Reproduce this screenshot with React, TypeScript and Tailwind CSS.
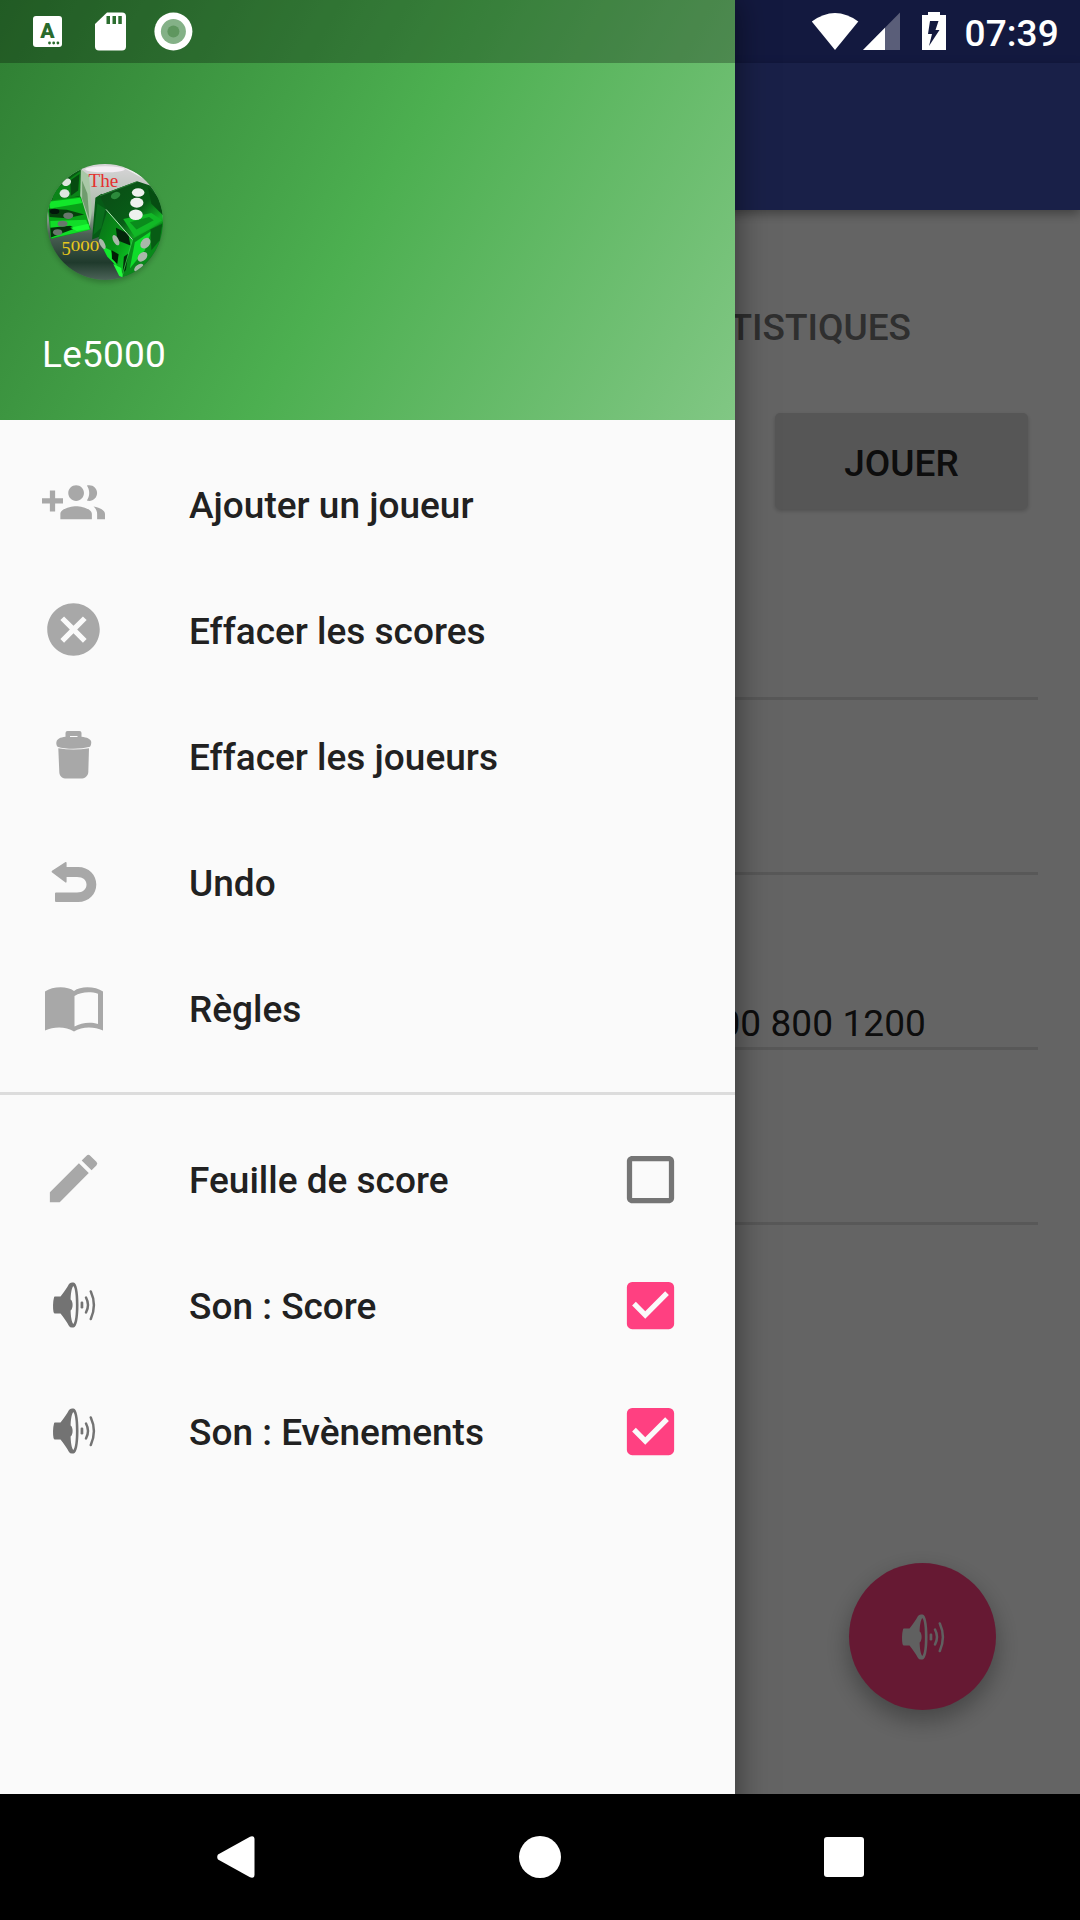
import type {ReactNode} from "react";
import {MdCancel, MdCheckBox, MdCheckBoxOutlineBlank, MdEdit} from "react-icons/md";

const rows = ["", "", "500 300 800 1200", ""];

function GroupAddIcon() {
    return (
        <svg viewBox="0 0 24 24" fill="currentColor" className="size-[63px]">
            <path d="M8 10H5V7H3v3H0v2h3v3h2v-3h3v-2zm10 1c1.660 0 2.990-1.340 2.990-3S19.660 5 18 5c-.32 0-.63.05-.91.14.57.81.9 1.790.9 2.860s-.34 2.040-.9 2.860c.28.09.59.14.91.14zm-5 0c1.660 0 2.990-1.340 2.990-3S14.660 5 13 5c-1.660 0-3 1.340-3 3s1.340 3 3 3zm6.620 2.160c.83.73 1.380 1.660 1.380 2.840v2h3v-2c0-1.540-2.370-2.490-4.380-2.840zM13 13c-2 0-6 1-6 3v2h12v-2c0-2-4-3-6-3z"/>
        </svg>
    )
}

function SpeakerIcon({className}: { className: string }) {
    return (
        <svg viewBox="0 0 44 46" fill="currentColor" className={className}>
            <path
                fillRule="evenodd"
                d="M2 15.5Q2 14.5 3 14.5H8.5C12 10 15 6 17 2Q18 .5 20 .5H21.5C24.8 .5 26.5 10 26.5 23S24.8 45.500 21.500 45.500H20Q18 45.500 17 44C15 40 12 36 8.500 31.500H3Q2 31.500 1.500 30C.8 26 .8 20 2 15.500ZM21.300 4C19.500 6 18.800 12 18.600 17.500C21.300 19 21.300 27 18.600 28.500C18.800 34 19.500 40 21.300 42C23.200 40 23.900 32 23.900 23S23.200 6 21.300 4Z"
            />
            <rect x="28.600" y="19.500" width="2.700" height="7" rx="1.200"/>
            <g fill="none" stroke="currentColor" strokeWidth="2.500" strokeLinecap="round">
                <path d="M34 15.500Q38 23 34 30.500"/>
                <path d="M38.800 9.500Q45 23 38.800 37"/>
            </g>
        </svg>
    )
}

function TrashIcon() {
    return (
        <svg viewBox="0 0 36 50" fill="currentColor" preserveAspectRatio="none" className="-mt-0.5 h-[49px] w-9">
            <path
                fillRule="evenodd"
                d="M9.500 7V3Q9.500 1 11.500 1H23.500Q25.500 1 25.500 3V7C31 7.500 35 9.500 35.200 12Q35.500 15 34 17Q27 19.200 17.500 19.200T1.500 17Q-.2 15 .5 12C1 9.500 4 7.500 9.500 7ZM14 6V7.200H21.500V6Z"
            />
            <path d="M2.300 18.500Q17.500 21.300 33 18.500L32.300 43C32 47 28.500 49.500 25 49.500H10.500C6.500 49.500 3.500 47 3.300 43Z"/>
        </svg>
    )
}

function UndoIcon() {
    return (
        <svg viewBox="0 0 46 42" fill="currentColor" className="h-[42px] w-[46px]">
            <path
                d="M.8 11.200Q.3 10.500 1 9.800L14.500 1Q15.600.6 15.600 2V6H27C38 6 45.300 14 45.300 23.500S38 41 27 41H5Q4 41 4 40V32.500Q4 31.500 5 31.500H26C32 31.500 35.500 28 35.500 23.500S32 16 26 16H15.600V20.500Q15.600 22 14.500 21.500Z"
            />
        </svg>
    )
}

function BookIcon() {
    return (
        <svg viewBox="0 0 58 45" fill="currentColor" className="mt-1 h-[45px] w-[58px]">
            <path
                fillRule="evenodd"
                d="M0 4.500C7-.5 22-1.500 29 4C36-1.500 51-.5 58 4.500V43.500C49 39.500 37 39.500 29 44.500C21 39.500 9 39.500 0 43.500ZM29.500 9V39.500C36 35.500 46 34.500 53 37V6.800C45 4.200 36 5 29.500 9Z"
            />
        </svg>
    )
}

function DiceAvatar() {
    return (
        <svg viewBox="80 70 350 350" className="size-[116px] rounded-full shadow-[0_3px_5px_rgba(0,0,0,0.2)]">
            <defs>
                <linearGradient id="table" x1="0" y1="0" x2="0" y2="1">
                    <stop offset="0" stopColor="#d9d5d9"/>
                    <stop offset=".4" stopColor="#a9bba9"/>
                    <stop offset=".6" stopColor="#4d6256"/>
                    <stop offset=".85" stopColor="#1f3a2c"/>
                    <stop offset="1" stopColor="#4c6358"/>
                </linearGradient>
                <linearGradient id="dieTop" x1="0" y1="0" x2="1" y2="1">
                    <stop offset="0" stopColor="#0a4a15"/>
                    <stop offset=".55" stopColor="#085c17"/>
                    <stop offset=".8" stopColor="#14b425"/>
                    <stop offset="1" stopColor="#064a10"/>
                </linearGradient>
                <linearGradient id="dieFront" x1="0" y1="0" x2="1" y2="1">
                    <stop offset="0" stopColor="#0b6a1a"/>
                    <stop offset=".5" stopColor="#069416"/>
                    <stop offset="1" stopColor="#12dd2c"/>
                </linearGradient>
            </defs>
            <rect x="80" y="70" width="350" height="350" fill="url(#table)"/>
            <ellipse cx="255" cy="86" rx="60" ry="9" fill="#f4eef4"/>
            <path d="M300 75L430 130V175L385 122Z" fill="#eef1ee"/>
            {/* left die */}
            <path d="M80 70H185L182 180L85 200Z" fill="#075c12"/>
            <path d="M100 150L180 92L182 165L95 185Z" fill="#0b8418"/>
            <path d="M150 120L178 100L174 150L152 166Z" fill="#064a10"/>
            <path d="M182 85L207 105L215 215L207 270L180 170Z" fill="#a9c8a7"/>
            <path d="M186 120L202 160L208 240L186 175Z" fill="#6f9c6d"/>
            <path d="M80 182L182 168L212 268L92 296Z" fill="#08a017"/>
            <path d="M85 184L180 172L187 188L90 204Z" fill="#12e62a"/>
            <path d="M85 205L140 208L192 222L140 234L88 230Z" fill="#053f0c"/>
            <path d="M90 242L198 238L210 268L92 294Z" fill="#11dd28"/>
            <path d="M90 262L150 256L166 264L92 292Z" fill="#04330a"/>
            <path d="M150 262L205 250L208 266L170 272Z" fill="#19ff32"/>
            <g fill="#dfe6df">
                <ellipse cx="139" cy="125" rx="14" ry="11" transform="rotate(-25 139 125)"/>
                <ellipse cx="133" cy="159" rx="15" ry="13"/>
            </g>
            <g fill="#68776c">
                <ellipse cx="144" cy="226" rx="15" ry="10"/>
                <ellipse cx="127" cy="250" rx="15" ry="9"/>
                <ellipse cx="112" cy="276" rx="14" ry="9"/>
            </g>
            <ellipse cx="103" cy="213" rx="14" ry="8" fill="#02160a"/>
            {/* right die */}
            <path d="M226 172L245 160L342 296L250 285L216 298Z" fill="#065a16"/>
            <path d="M232 190L256 205L244 262L220 284Z" fill="#0a6e1c"/>
            <path d="M238 164L352 122L400 138L430 190V260L340 296L258 205Z" fill="url(#dieTop)"/>
            <path d="M310 236L395 218L428 240L345 290Z" fill="#11b826"/>
            <path d="M330 246L388 230L402 240L350 268Z" fill="#0a8c1c"/>
            <path d="M385 140L430 185V225L395 190Z" fill="#064d12"/>
            <path d="M235 296L262 210L338 296L308 412Z" fill="url(#dieFront)"/>
            <path d="M338 296L430 245V345L370 400L304 412Z" fill="#098a1a"/>
            <path d="M345 306L395 272L375 330L330 385Z" fill="#0fdc2a"/>
            <path d="M392 268L428 250L420 300L395 330Z" fill="#075c14"/>
            <path d="M288 262L325 280L332 316L292 300Z" fill="#03260a"/>
            <path d="M246 318L272 330L292 380L262 350Z" fill="#12e62d"/>
            <path d="M275 330L296 342L292 372L276 356Z" fill="#021c06"/>
            <path d="M312 350L325 340L318 390L308 400Z" fill="#032f0a"/>
            <path d="M280 372L304 384L308 412L298 408Z" fill="#22ff3c"/>
            <path d="M258 207L338 298" stroke="#b9e8bd" strokeWidth="3"/>
            <path d="M338 298L306 410" stroke="#41e356" strokeWidth="2"/>
            <path d="M240 166L350 124" stroke="#2a7d36" strokeWidth="3"/>
            <ellipse cx="287" cy="165" rx="15" ry="10" fill="#2c8a3b" transform="rotate(-25 287 165)"/>
            <g fill="#eef1ee">
                <ellipse cx="355" cy="156" rx="19" ry="13"/>
                <ellipse cx="351" cy="187" rx="20" ry="15"/>
                <ellipse cx="348" cy="223" rx="21" ry="16"/>
            </g>
            <g fill="#a9b8a9">
                <ellipse cx="377" cy="309" rx="18" ry="13" transform="rotate(-50 377 309)"/>
                <ellipse cx="368" cy="350" rx="17" ry="12" transform="rotate(-45 368 350)"/>
                <ellipse cx="357" cy="383" rx="16" ry="9" transform="rotate(-35 357 383)"/>
                <ellipse cx="288" cy="300" rx="8" ry="17" transform="rotate(-28 288 300)"/>
                <ellipse cx="247" cy="311" rx="7" ry="17" transform="rotate(-28 247 311)"/>
            </g>
            <g className="font-['Liberation_Serif',serif]">
                <text x="205" y="138" fontSize="56" fill="#e5302f" textLength="90" lengthAdjust="spacingAndGlyphs">The</text>
                <g fill="#e8c81c">
                    <text x="124" y="344" fontSize="56" textLength="28" lengthAdjust="spacingAndGlyphs">5</text>
                    <text x="152" y="334" fontSize="41" textLength="86" lengthAdjust="spacingAndGlyphs">000</text>
                </g>
            </g>
        </svg>
    )
}

function MenuItem({icon, label, children}: { icon: ReactNode; label: string; children?: ReactNode }) {
    return (
        <li className="flex h-[126px] items-center pl-[42px] pr-[53px]">
            <span className="flex size-[63px] items-center justify-center pb-px text-[#a8a8a8]">{icon}</span>
            <span className="ml-[84px] flex-1 pt-0.5 font-medium text-[#212121]">{label}</span>
            {children}
        </li>
    )
}

function Drawer() {
    return (
        <aside className="absolute -bottom-8 left-0 top-0 w-[735px] bg-[#fafafa] shadow-[0_0_32px_rgba(0,0,0,0.5)]">
            <header className="flex h-[420px] flex-col bg-[linear-gradient(119.7deg,#2e7d32,#4caf50_50%,#81c784)]">
                <div className="h-[63px] bg-black/27"/>
                <div className="pl-[47px] pt-[101px]">
                    <DiceAvatar/>
                </div>
                <p className="pl-[42px] pt-[53px] tracking-[0.2px] text-white">Le5000</p>
            </header>
            <ul className="border-b-3 border-[#dcdcdc] py-[21px]">
                <MenuItem icon={<GroupAddIcon/>} label="Ajouter un joueur"/>
                <MenuItem icon={<MdCancel className="size-[63px]"/>} label="Effacer les scores"/>
                <MenuItem icon={<TrashIcon/>} label="Effacer les joueurs"/>
                <MenuItem icon={<UndoIcon/>} label="Undo"/>
                <MenuItem icon={<BookIcon/>} label="Règles"/>
            </ul>
            <ul className="pt-[21px]">
                <MenuItem icon={<MdEdit className="size-[63px]"/>} label="Feuille de score">
                    <MdCheckBoxOutlineBlank className="size-[63px] text-[#757575]"/>
                </MenuItem>
                <MenuItem icon={<SpeakerIcon className="h-[46px] w-11 text-[#737373]"/>} label="Son : Score">
                    <MdCheckBox className="size-[63px] text-[#ff4081]"/>
                </MenuItem>
                <MenuItem icon={<SpeakerIcon className="h-[46px] w-11 text-[#737373]"/>} label="Son : Evènements">
                    <MdCheckBox className="size-[63px] text-[#ff4081]"/>
                </MenuItem>
            </ul>
        </aside>
    )
}

function StatusBar() {
    return (
        <div className="absolute inset-x-0 top-0 flex h-[63px] items-center text-white">
            <svg viewBox="0 0 200 63" className="h-[63px] w-[200px]" fill="currentColor">
                <rect x="33" y="16" width="29" height="31" rx="3"/>
                <g fill="#2a6b2d">
                    <text x="47.300" y="38.300" fontSize="21" fontWeight="900" textAnchor="middle">A</text>
                    <circle cx="49.500" cy="43" r="1.400"/>
                    <circle cx="53.700" cy="43" r="1.400"/>
                    <circle cx="57.900" cy="43" r="1.400"/>
                </g>
                <path d="M107 12.500H122Q126 12.500 126 16.500V46.500Q126 50.500 122 50.500H99Q95 50.500 95 46.500V24Z"/>
                <path d="M106.500 16H110V24H106.500ZM112.500 16H116V24H112.500ZM118.300 16H121.800V24H118.300Z" fill="#2c6e30"/>
                <circle cx="173.400" cy="31.500" r="19"/>
                <circle cx="173.400" cy="31.500" r="12.500" fill="#84b187"/>
                <circle cx="173.400" cy="31.500" r="6" fill="#5f965f"/>
            </svg>
            <div className="flex-1"/>
            <svg viewBox="0 0 140 63" className="h-[63px] w-[140px]" fill="currentColor">
                <path d="M1.800 21.500Q25 4.500 48.300 21.500L25 50Z"/>
                <path d="M90 12.500V50H53Z" opacity=".3"/>
                <path d="M75 27.700V50H53Z"/>
                <path
                    fillRule="evenodd"
                    d="M118 12H130V15H136V50H112V15H118ZM120 21L118 34H122L119 46L129.500 30H125.500L128.500 21Z"
                />
            </svg>
            <span className="w-[130px] pl-[14.500px] pt-[3px] font-medium tracking-[0.1px]">07:39</span>
        </div>
    )
}

function NavigationBar() {
    return (
        <nav className="relative z-10 flex h-[126px] items-center bg-black px-[84px] text-white">
            <div className="flex flex-1 justify-center">
                <svg viewBox="0 0 38 42" className="h-[42px] w-[38px]" fill="currentColor">
                    <path d="M1 18.500L33 .7Q37.500-.8 37.500 3.500V38.500Q37.500 42.800 33 41.300L1 23.500Q-.6 21 1 18.500Z"/>
                </svg>
            </div>
            <div className="flex flex-1 justify-center">
                <span className="size-[42px] rounded-full bg-white"/>
            </div>
            <div className="flex flex-1 justify-center">
                <span className="size-10 rounded-[3px] bg-white"/>
            </div>
        </nav>
    )
}

export default function App() {
    return (
        <div className="relative flex h-[1920px] w-[1080px] flex-col overflow-hidden bg-[#fafafa] font-[Roboto,sans-serif] text-[37px] leading-[43px]">
            <div className="h-[63px] bg-[#303f9f]"/>
            <div className="h-[147px] bg-[#3f51b5] shadow-[0_4px_10px_rgba(0,0,0,0.35)]"/>
            <main className="flex flex-1 flex-col pt-[42px]">
                <div className="flex h-[151px] items-center justify-end pr-[169px] font-medium text-[#757575]">STATISTIQUES</div>
                <div className="flex justify-end pr-[52px] pt-[10px]">
                    <button className="h-[96px] w-[253px] rounded-[5px] bg-[#d6d7d7] pt-[5px] font-medium text-[#212121] shadow-[0_2px_4px_rgba(0,0,0,0.2)]">JOUER</button>
                </div>
                <ul className="mx-[42px] mt-[16px]">
                    {rows.map((score, i) => (
                        <li key={i} className="flex h-[175px] items-end justify-end border-b-3 border-[#dcdcdc] pb-0.5 pr-[112px] tracking-[0.1px] text-[#212121]">{score}</li>
                    ))}
                </ul>
                <div className="mt-auto flex justify-end pb-[84px] pr-[84px]">
                    <button className="flex size-[147px] items-center justify-center rounded-full bg-[#ff4081] shadow-[0_10px_24px_rgba(0,0,0,0.32)]">
                        <SpeakerIcon className="h-[46px] w-11 text-[#f0f0f0]"/>
                    </button>
                </div>
            </main>
            <NavigationBar/>
            <div className="absolute inset-x-0 top-0 h-[1794px] overflow-hidden bg-black/60">
                <Drawer/>
                <StatusBar/>
            </div>
        </div>
    )
}
